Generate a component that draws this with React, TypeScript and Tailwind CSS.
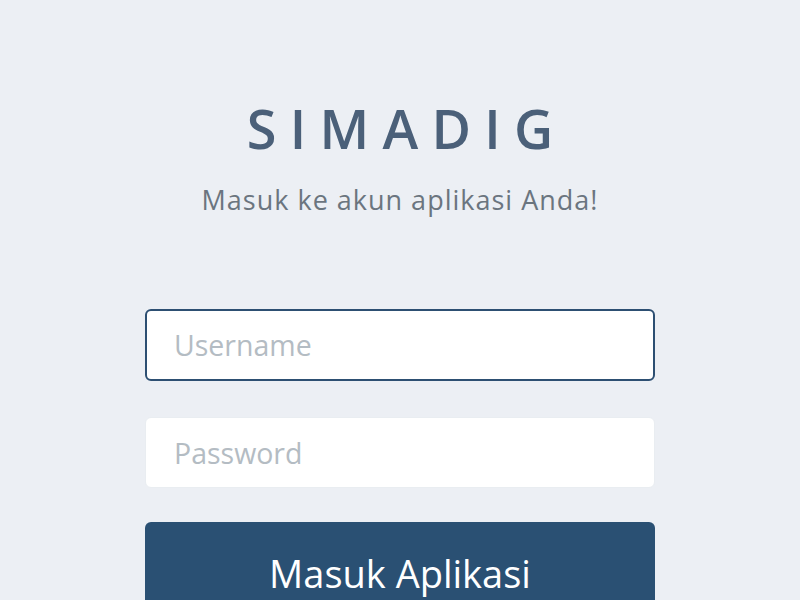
import { useState } from 'react';

export default function App() {
  const [username, setUsername] = useState('');
  const [password, setPassword] = useState('');

  return (
    <div className="min-h-screen bg-[#eceff4] flex justify-center overflow-hidden" style={{ fontFamily: '"Open Sans", sans-serif' }}>
      <div className="w-[510px] pt-[96px] flex flex-col items-center">
        <h1 className="text-[54px] leading-[64px] tracking-[0.245em] pl-[0.245em] text-[#4b6079] font-semibold">SIMADIG</h1>
        <p className="mt-[22px] text-[27px] leading-[36px] tracking-[1px] text-[#6b757f]">Masuk ke akun aplikasi Anda!</p>

        <form className="w-full mt-[91px] flex flex-col" onSubmit={(e) => e.preventDefault()}>
          <input
            autoFocus
            value={username}
            onChange={(e) => setUsername(e.target.value)}
            placeholder="Username"
            className="h-[72px] w-full rounded-[6px] bg-white border-2 border-[#2d4f72] px-[27px] text-[28.5px] text-[#3c4650] caret-[#444] placeholder:text-[#b4bcc3] outline-none"
          />
          <input
            type="password"
            value={password}
            onChange={(e) => setPassword(e.target.value)}
            placeholder="Password"
            className="mt-[36px] h-[71px] w-full rounded-[6px] bg-white border border-[#e9edf1] px-[28px] text-[28.5px] text-[#3c4650] placeholder:text-[#b4bcc3] outline-none"
          />
          <button type="submit" className="mt-[34px] h-[100px] w-full rounded-[6px] bg-[#2a5073] text-white text-[38px] leading-none pt-[2px]">
            Masuk Aplikasi
          </button>
        </form>
      </div>
    </div>
  );
}
